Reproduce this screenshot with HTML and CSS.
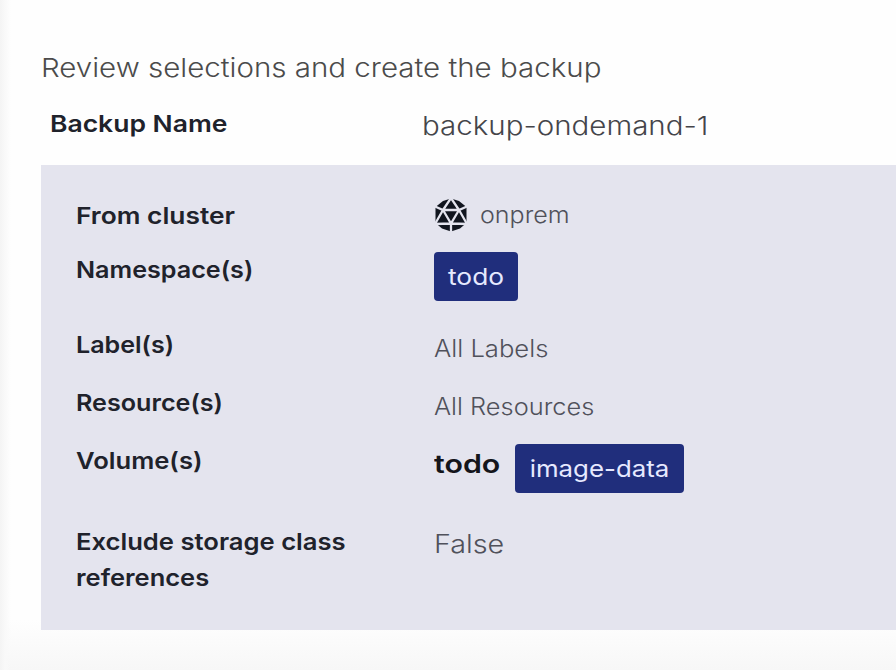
FILE: index.html
```html
<!DOCTYPE html>
<html lang="en">
<head>
<meta charset="utf-8">
<title>Create backup</title>
<link rel="stylesheet" href="styles.css">
</head>
<body>
<main class="page">
  <h1 class="heading"><span class="wide t-heading">Review selections and create the backup</span></h1>
  <div class="name-row">
    <div class="label"><span class="wide t-name">Backup Name</span></div>
    <div class="backup-name"><span class="wide t-backup">backup-ondemand-1</span></div>
  </div>
  <section class="panel">
    <div class="row row-cluster">
      <div class="label"><span class="wide t-from">From cluster</span></div>
      <div class="value cluster">
        <svg class="cluster-icon" viewBox="0 0 34 34" aria-hidden="true">
          <path fill="#11151f" d="M17 .5 25 3l7.500 6v16L26 30.500l-9 3-9-3L1.500 25V9L9 3z"/>
          <path fill="none" stroke="#e4e4ee" stroke-width="2.3" d="M9 12h16L17 25.500zM17 0 9 12 0 8M9 12 1 26l16-.5V34M17 0l8 12 9-4M25 12l8 14-16-.5"/>
        </svg>
        <span class="wide t-onprem">onprem</span>
      </div>
    </div>
    <div class="row row-namespace">
      <div class="label"><span class="wide t-namespace">Namespace(s)</span></div>
      <div class="value"><span class="badge badge-todo"><span class="wide t-todo">todo</span></span></div>
    </div>
    <div class="row row-labels">
      <div class="label"><span class="wide t-label">Label(s)</span></div>
      <div class="value"><span class="wide t-all-labels">All Labels</span></div>
    </div>
    <div class="row row-resources">
      <div class="label"><span class="wide t-resource">Resource(s)</span></div>
      <div class="value"><span class="wide t-all-resources">All Resources</span></div>
    </div>
    <div class="row row-volumes">
      <div class="label"><span class="wide t-volume">Volume(s)</span></div>
      <div class="value volumes"><strong class="volume-ns"><span class="wide t-volume-ns">todo</span></strong><span class="badge badge-image"><span class="wide t-image">image-data</span></span></div>
    </div>
    <div class="row row-exclude">
      <div class="label"><span class="wide t-exclude">Exclude storage class</span><br><span class="wide t-references">references</span></div>
      <div class="value value-large"><span class="wide t-false">False</span></div>
    </div>
  </section>
</main>
</body>
</html>
```
FILE: styles.css
```css
* { box-sizing: border-box; }

body {
  margin: 0;
  height: 670px;
  overflow: hidden;
  font-family: Inter, "Liberation Sans", sans-serif;
  font-size: 23.5px;
  line-height: 36px;
  color: #50515b;
  white-space: nowrap;
  background:
    linear-gradient(90deg, #f4f4f4 0, #f9f9f9 5px, rgba(255,255,255,0) 11px),
    linear-gradient(#fefefe 0, #fefefe 620px, #f7f7f7 670px);
}

.page { padding: 50px 0 0 41px; }

.heading {
  margin: 0;
  height: 56px;
  font-size: 26px;
  font-weight: 300;
  color: #4b4b4b;
}

.name-row {
  display: grid;
  grid-template-columns: 372px 1fr;
  height: 59px;
  padding-left: 9px;
}

.label { font-weight: 600; color: #20222b; }
.backup-name { padding-top: 2px; font-size: 26px; font-weight: 300; color: #45454a; }

.panel {
  height: 465px;
  padding: 33px 0 0 35px;
  background: #e4e4ee;
}

.row { display: grid; grid-template-columns: 358px 1fr; }
.value { font-weight: 300; }
.row-cluster { height: 54px; }
.row-namespace { height: 75px; }
.row-labels { height: 58px; }
.row-resources { height: 58px; }
.row-volumes { height: 81px; }
.row-labels .value, .row-resources .value { padding-top: 4px; }
.value-large { padding-top: 2px; font-size: 25px; }

.cluster { display: flex; align-items: center; height: 34px; gap: 12px; }
.cluster-icon { width: 34px; height: 34px; flex: none; }

.badge {
  display: flex;
  align-items: center;
  justify-content: center;
  height: 49px;
  border-radius: 4px;
  background: #202e7c;
  color: #e6e9ff;
  font-weight: 400;
}
.badge-todo { width: 84px; }
.badge-image { width: 169px; }
.volumes { display: flex; gap: 15px; padding-top: 1px; }
.volume-ns { width: 66px; padding-top: 2px; font-size: 25.5px; font-weight: 600; color: #14151b; }

/* Extended letterforms */
.wide { display: inline-block; transform-origin: left center; }
.badge .wide { transform-origin: center; }
.t-heading { transform: scaleX(1.134); }
.t-name { transform: scaleX(1.127); }
.t-backup { transform: scaleX(1.134); }
.t-from { transform: scaleX(1.12); }
.t-namespace { transform: scaleX(1.07); }
.t-label { transform: scaleX(1.066); }
.t-resource { transform: scaleX(1.07); }
.t-volume { transform: scaleX(1.09); }
.t-exclude { transform: scaleX(1.09); }
.t-references { transform: scaleX(1.085); }
.t-onprem { transform: scaleX(1.065); }
.t-todo { transform: scaleX(1.12); }
.t-all-labels { transform: scaleX(1.09); }
.t-all-resources { transform: scaleX(1.08); }
.t-volume-ns { transform: scaleX(1.19); }
.t-image { transform: scaleX(1.1); }
.t-false { transform: scaleX(1.15); }
```
